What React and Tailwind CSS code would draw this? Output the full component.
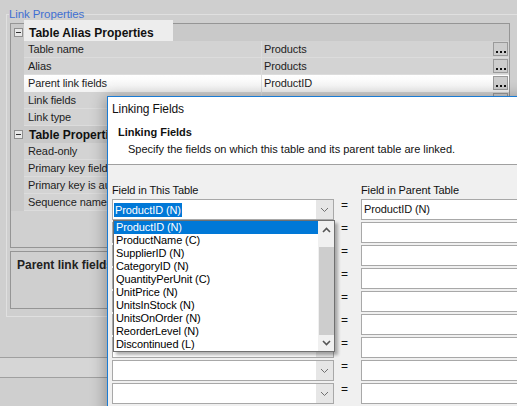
import React from "react";

function Minus() {
  return (
    <div className="w-[9px] h-[9px] border border-[#8f8f8f] bg-[#e8e8e8] flex items-center justify-center">
      <div className="w-[5px] h-[1px] bg-[#333]" />
    </div>
  );
}

function Dots() {
  return (
    <div className="self-start w-[15px] h-[14px] mt-[1px] mr-[1px] border border-[#9a9a9a] bg-[#cdcdcd] flex items-end justify-center gap-[2px] pb-[2px]">
      <div className="w-[2px] h-[2px] bg-[#111]" />
      <div className="w-[2px] h-[2px] bg-[#111]" />
      <div className="w-[2px] h-[2px] bg-[#111]" />
    </div>
  );
}

function Cat({ label, hl }) {
  return (
    <div className="flex h-[17px] bg-[#c9c9c9]">
      <div className="w-[13px] flex items-center pl-[3px]">
        <Minus />
      </div>
      {hl ? (
        <div className="-mt-[4px] h-[21px] pt-[4px] w-[149px] bg-[#ededed]">
          <div className="h-[17px] flex items-center pl-[5px] font-bold text-[12px] tracking-[0px] text-[#111]">
            {label}
          </div>
        </div>
      ) : (
        <div className="h-[17px] flex items-center pl-[5px] font-bold text-[12px] tracking-[0px] text-[#111]">
          {label}
        </div>
      )}
    </div>
  );
}

function Row({ name, value, btn, sel }) {
  const cell = sel ? "" : "border-b border-[#dcdcdc]";
  return (
    <div
      className={`flex h-[17px] ${
        sel ? "bg-linear-to-b from-white to-[#f3f3f3]" : "bg-[#d3d3d3]"
      }`}
    >
      <div className="w-[13px] bg-[#c9c9c9]" />
      <div
        className={`w-[238px] pl-[4px] flex items-center border-r border-[#dcdcdc] whitespace-nowrap overflow-hidden ${cell}`}
      >
        {name}
      </div>
      <div className={`flex-1 flex items-center pl-[2px] ${cell}`}>
        <span className="flex-1">{value}</span>
        {btn && <Dots />}
      </div>
    </div>
  );
}

function Chevron({ up, bold }) {
  return (
    <svg width="9" height="6" viewBox="0 0 9 6" className="block">
      <path
        d={up ? "M1 5 L4.5 1.5 L8 5" : "M1 1 L4.5 4.5 L8 1"}
        fill="none"
        stroke={bold ? "#555" : "#707070"}
        strokeWidth={bold ? 1.6 : 1}
      />
    </svg>
  );
}

const items = [
  "ProductID (N)",
  "ProductName (C)",
  "SupplierID (N)",
  "CategoryID (N)",
  "QuantityPerUnit (C)",
  "UnitPrice (N)",
  "UnitsInStock (N)",
  "UnitsOnOrder (N)",
  "ReorderLevel (N)",
  "Discontinued (L)",
];

function Dropdown() {
  return (
    <div className="absolute left-0 top-[20px] w-[222px] h-[132px] border border-[#707070] bg-white shadow-[3px_3px_3px_rgba(0,0,0,0.3)] flex z-10">
      <div className="flex-1 flex flex-col">
        {items.map((it, i) => (
          <div
            key={it}
            className={`h-[13px] leading-[13px] pl-[2px] whitespace-nowrap ${
              i === 0 ? "bg-[#0078d7] text-white" : "text-[#000]"
            }`}
          >
            {it}
          </div>
        ))}
      </div>
      <div className="w-[16px] bg-[#f0f0f0] flex flex-col">
        <div className="h-[17px] flex items-center justify-center">
          <Chevron up bold />
        </div>
        <div className="h-[9px]" />
        <div className="h-[88px] w-[15px] ml-[1px] bg-[#cdcdcd]" />
        <div className="h-[16px] flex items-center justify-center">
          <Chevron bold />
        </div>
      </div>
    </div>
  );
}

function LinkRow({ first, right }) {
  return (
    <div className="flex h-[21px]">
      <div className="relative w-[222px] h-[21px] border border-[#a8a8a8] bg-white flex">
        <div className="flex-1 flex items-center pl-[1px]">
          {first && (
            <span className="h-[14px] leading-[14px] px-[1px] bg-[#0078d7] text-white">
              ProductID (N)
            </span>
          )}
        </div>
        <div className="w-[17px] h-full bg-[#e6e6e6] flex items-center justify-center">
          <Chevron />
        </div>
        {first && <Dropdown />}
      </div>
      <div className="w-[27px] pl-[7px] text-[12px] leading-[12px] text-[#111]">=</div>
      <div className="w-[170px] h-[21px] border border-[#a8a8a8] bg-white flex items-center pl-[2px] text-[#111]">
        {right}
      </div>
    </div>
  );
}

export default function App() {
  return (
    <div className="relative w-[517px] h-[406px] overflow-hidden bg-[#cfcfcf] text-[11px] tracking-[-0.1px] text-[#1d1d1d] font-['Liberation_Sans',Arial,sans-serif]">
      <fieldset className="ml-[6px] mt-[8px] w-[520px] border border-[#e0e0e0] pb-[7px]">
        <legend className="ml-[2px] text-[11.5px] leading-[12px] text-[#3f6fd2]">
          Link Properties
        </legend>
        <div className="ml-[3px] mt-[3px] w-[500px] h-[225px] border border-[#959595] bg-[#d0d0d0] flex flex-col">
          <Cat label="Table Alias Properties" hl />
          <Row name="Table name" value="Products" btn />
          <Row name="Alias" value="Products" btn />
          <Row name="Parent link fields" value="ProductID" btn sel />
          <Row name="Link fields" value="ProductID" btn />
          <Row name="Link type" value="" />
          <Cat label="Table Properties" />
          <Row name="Read-only" value="" />
          <Row name="Primary key field(s)" value="" />
          <Row name="Primary key is auto-generated" value="" />
          <Row name="Sequence name" value="" />
        </div>
        <div className="ml-[3px] mt-[3px] w-[500px] h-[58px] border border-[#959595] pl-[6px] pt-[4px]">
          <div className="font-bold text-[12px] tracking-[0px] text-[#222]">
            Parent link fields
          </div>
        </div>
      </fieldset>
      <div className="mt-[40px] h-[21px] border-y border-[#a0a0a0] bg-[#d6d6d6]" />

      <div className="absolute left-[107px] top-[96px] w-[430px] h-[330px] border border-[#1a7bd4] bg-[#f0f0f0] shadow-[-2px_0_14px_rgba(0,0,0,0.3)] flex flex-col">
        <div className="h-[22px] bg-white pl-[4px] pt-[2px] flex items-center text-[12px] text-[#111]">
          Linking Fields
        </div>
        <div className="h-[46px] bg-white border-b border-[#a0a0a0] pl-[10px] pt-[6px]">
          <div className="h-[14px] leading-[14px] font-bold tracking-[0px] text-[#111]">
            Linking Fields
          </div>
          <div className="mt-[3px] h-[14px] leading-[14px] pl-[10px] tracking-[0px] text-[#111]">
            Specify the fields on which this table and its parent table are linked.
          </div>
        </div>
        <div className="pl-[4px] pt-[18px]">
          <div className="flex h-[14px] leading-[14px] text-[#111]">
            <div className="w-[249px]">Field in This Table</div>
            <div>Field in Parent Table</div>
          </div>
          <div className="mt-[2px] flex flex-col gap-[2px]">
            <LinkRow first right="ProductID (N)" />
            <LinkRow />
            <LinkRow />
            <LinkRow />
            <LinkRow />
            <LinkRow />
            <LinkRow />
            <LinkRow />
            <LinkRow />
          </div>
        </div>
      </div>
    </div>
  );
}
